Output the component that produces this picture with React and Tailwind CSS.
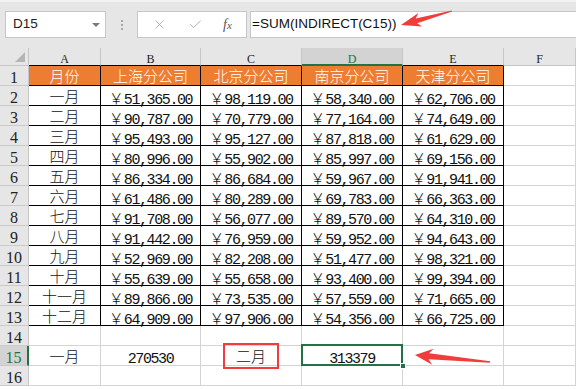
import React from "react";
import { X, Check } from "lucide-react";

const cjk = { fontFamily: '"Noto Sans CJK SC", sans-serif' };
const mono = { fontFamily: '"Liberation Mono", "Noto Sans CJK SC", monospace' };
const serif = { fontFamily: '"Liberation Serif", serif' };

const cols = ["A", "B", "C", "D", "E", "F"];
const widths = ["w-[72px]", "w-[100px]", "w-[101px]", "w-[101px]", "w-[101px]", "flex-1"];

const header = ["月份", "上海分公司", "北京分公司", "南京分公司", "天津分公司"];

const data = [
  ["一月", "51,365.00", "98,119.00", "58,340.00", "62,706.00"],
  ["二月", "90,787.00", "70,779.00", "77,164.00", "74,649.00"],
  ["三月", "95,493.00", "95,127.00", "87,818.00", "61,629.00"],
  ["四月", "80,996.00", "55,902.00", "85,997.00", "69,156.00"],
  ["五月", "86,334.00", "86,684.00", "59,967.00", "91,941.00"],
  ["六月", "61,486.00", "80,289.00", "69,783.00", "66,363.00"],
  ["七月", "91,708.00", "56,077.00", "89,570.00", "64,310.00"],
  ["八月", "91,442.00", "76,959.00", "59,952.00", "94,643.00"],
  ["九月", "52,969.00", "82,208.00", "51,477.00", "98,321.00"],
  ["十月", "55,639.00", "55,658.00", "93,400.00", "99,394.00"],
  ["十一月", "89,866.00", "73,535.00", "57,559.00", "71,665.00"],
  ["十二月", "64,909.00", "97,906.00", "54,356.00", "66,725.00"],
];

function RowHead({ n, active }) {
  return (
    <div
      className={`w-[29px] shrink-0 flex items-center justify-center pt-[4px] leading-none border-b border-b-[#cacaca] text-[16px] ${
        active
          ? "bg-[#d3d3d3] text-[#217346] border-r-2 border-r-[#217346]"
          : "bg-[#e6e6e6] text-[#222] border-r border-r-[#c6c6c6]"
      }`}
      style={serif}
    >
      {n}
    </div>
  );
}

// kind: "cjk" or "num" picks the padding that puts the text on Excel's baseline
function Cell({ i, black, kind = "cjk", className = "", children }) {
  const pad = kind === "num" ? "pt-[7px] leading-none" : "pt-[1px]";
  return (
    <div
      className={`${widths[i]} shrink-0 h-full flex items-center justify-center ${pad} border-r border-b ${
        black ? "border-black" : "border-[#d4d4d4]"
      } ${className}`}
      style={kind === "num" ? mono : cjk}
    >
      {children}
    </div>
  );
}

function Num({ v }) {
  return (
    <span className="text-[15px] tracking-[-1.4px] text-[#111]">
      <span style={cjk} className="font-light tracking-normal">￥</span>
      {v}
    </span>
  );
}

function App() {
  return (
    <div className="w-[576px] h-[389px] overflow-hidden bg-white relative">
      {/* formula bar */}
      <div className="h-[48px] bg-[#e6e6e6] border-t-2 border-t-[#f2f2f2] flex items-start pl-[5px] pt-[9px]">
        <div className="w-[101px] h-[27px] bg-white border border-[#c6c6c6] flex items-center justify-between pl-[7px] pr-[5px]">
          <span className="text-[13.5px] text-[#222]" style={{ fontFamily: '"Liberation Sans", sans-serif' }}>
            D15
          </span>
          <span className="w-0 h-0 border-l-[4px] border-r-[4px] border-t-[4px] border-l-transparent border-r-transparent border-t-[#7a7a7a]" />
        </div>
        <div className="w-[31px] h-[27px] flex flex-col items-center justify-center gap-[2px]">
          <span className="w-[2px] h-[2px] bg-[#a8a8a8]" />
          <span className="w-[2px] h-[2px] bg-[#a8a8a8]" />
          <span className="w-[2px] h-[2px] bg-[#a8a8a8]" />
        </div>
        <div className="w-[110px] h-[27px] bg-white border border-[#c6c6c6] flex items-center justify-around px-[4px]">
          <X size={15} strokeWidth={1.4} className="text-[#a8a8a8]" />
          <Check size={15} strokeWidth={1.4} className="text-[#a8a8a8]" />
          <span className="italic text-[14px] text-[#555]" style={serif}>
            f<span className="text-[11px]">x</span>
          </span>
        </div>
        <div className="flex-1 ml-[3px] h-[27px] bg-white border border-r-0 border-[#c6c6c6] flex items-center pl-[1px]">
          <span className="text-[13.5px] text-[#111]" style={{ fontFamily: '"Liberation Sans", sans-serif' }}>
            =SUM(INDIRECT(C15))
          </span>
        </div>
      </div>

      {/* column headers */}
      <div className="flex h-[18px]">
        <div className="w-[29px] shrink-0 bg-[#e6e6e6] border-r border-b border-[#c6c6c6] relative">
          <svg className="absolute right-[3px] bottom-[3px]" width="10" height="10">
            <polygon points="10,0 10,10 0,10" fill="#b5b5b5" />
          </svg>
        </div>
        {cols.map((c, i) => (
          <div
            key={c}
            className={`${widths[i]} shrink-0 flex items-center justify-center pt-[5px] leading-none text-[12px] border-r border-[#c6c6c6] ${
              c === "D"
                ? "bg-[#d3d3d3] text-[#217346] border-b-2 border-b-[#217346]"
                : c === "F"
                ? "bg-[#e6e6e6] text-[#222] border-b border-b-[#c6c6c6]"
                : "bg-[#e6e6e6] text-[#222] border-b border-b-black"
            }`}
            style={serif}
          >
            {c}
          </div>
        ))}
      </div>

      {/* row 1 */}
      <div className="flex h-[20px]">
        <RowHead n={1} />
        {header.map((h, i) => (
          <Cell key={i} i={i} black className="bg-[#ed7d31] text-white text-[15px] font-light">
            {h}
          </Cell>
        ))}
        <Cell i={5} />
      </div>

      {data.map((r, ri) => (
        <div key={ri} className="flex h-[20px]">
          <RowHead n={ri + 2} />
          <Cell i={0} black className="text-[15px] text-[#111] font-light">
            {r[0]}
          </Cell>
          {r.slice(1).map((v, ci) => (
            <Cell key={ci} i={ci + 1} black kind="num">
              <Num v={v} />
            </Cell>
          ))}
          <Cell i={5} />
        </div>
      ))}

      {/* row 14 */}
      <div className="flex h-[20px]">
        <RowHead n={14} />
        {cols.map((c, i) => (
          <Cell key={c} i={i} />
        ))}
      </div>

      {/* row 15 */}
      <div className="flex h-[20px]">
        <RowHead n={15} active />
        <Cell i={0} className="text-[15px] text-[#111] font-light">
          一月
        </Cell>
        <Cell i={1} kind="num" className="text-[15px] tracking-[-1.4px] text-[#111]">
          270530
        </Cell>
        <Cell i={2} className="relative text-[15px] text-[#111] font-light">
          <div className="absolute left-[22px] top-[-3px] w-[56px] h-[26px] border-2 border-[#f03c3c]" />
          二月
        </Cell>
        <Cell i={3} kind="num" className="relative text-[15px] tracking-[-1.4px] text-[#111]">
          <div className="absolute left-[-1px] top-[-2px] right-[-1px] bottom-[-1px] border-2 border-[#217346]" />
          <div className="absolute right-[-4px] bottom-[-4px] w-[6px] h-[6px] bg-[#217346] border border-white" />
          313379
        </Cell>
        <Cell i={4} />
        <Cell i={5} />
      </div>

      {/* row 16 */}
      <div className="flex h-[20px]">
        <RowHead n={16} />
        {cols.map((c, i) => (
          <Cell key={c} i={i} />
        ))}
      </div>

      {/* annotation arrows */}
      <svg className="absolute left-0 top-0 pointer-events-none" width="576" height="389">
        <polygon
          fill="#f23b3b"
          points="401,25 422.2,26.4 417.1,23.2 452.1,11.6 451.9,10.4 415.7,18.4 418.4,12.9"
        />
        <polygon
          fill="#f23b3b"
          points="415,355 433.6,348.7 429.2,353.3 490.1,361.3 489.9,362.8 428.6,359.3 432.2,364.7"
        />
      </svg>
    </div>
  );
}

export default App;
